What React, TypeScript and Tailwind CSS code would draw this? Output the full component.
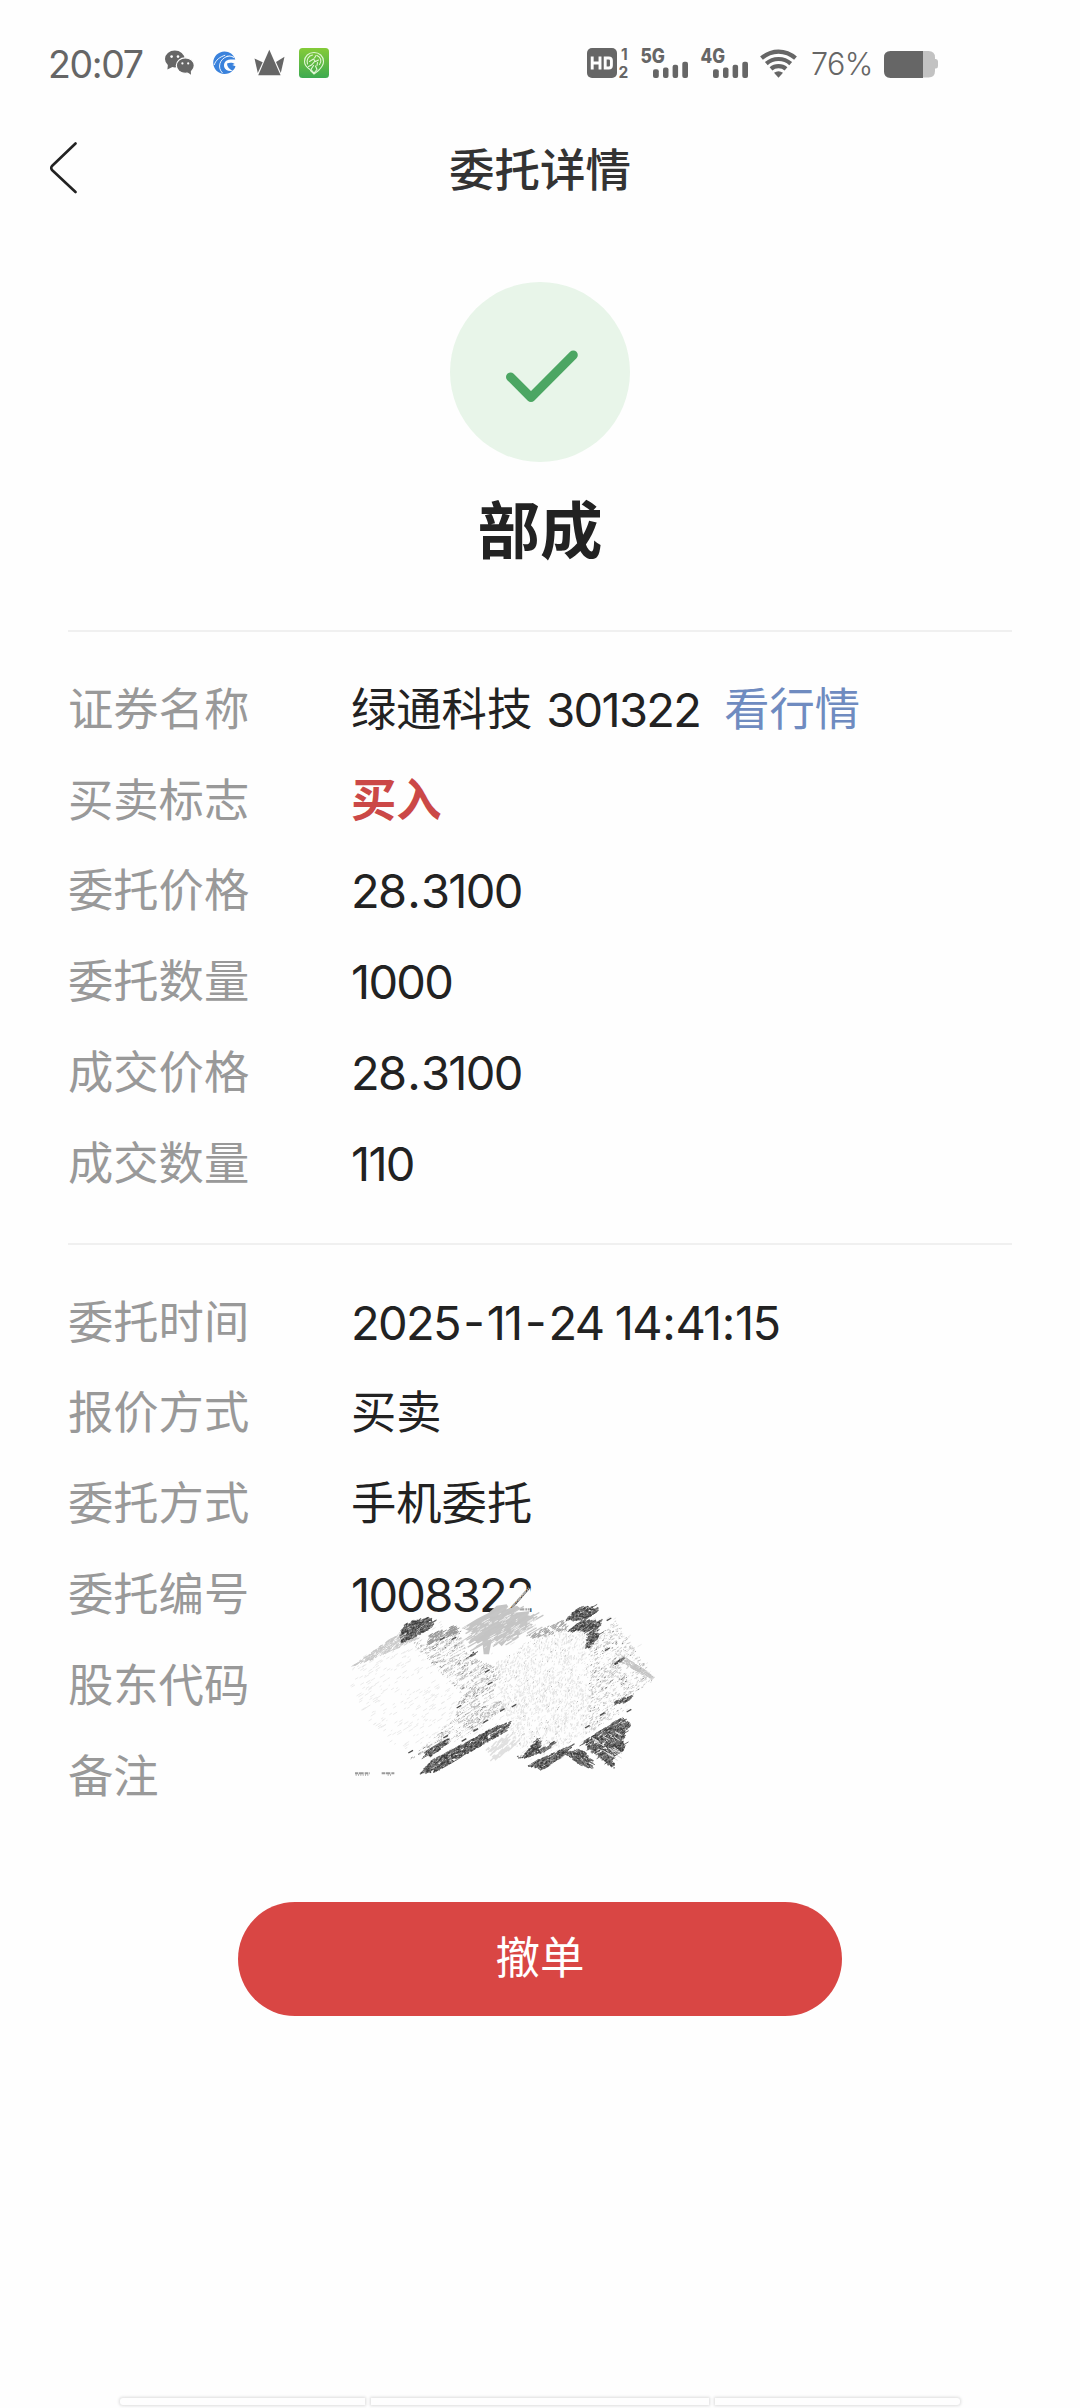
import React from "react";

/* ---------- status bar icons ---------- */

function ChatIcon() {
  return (
    <svg className="ml-[17px] h-[30px] w-[29px]" viewBox="0 0 29 30">
      <ellipse cx="9.8" cy="11" rx="9.8" ry="8.4" fill="#666" />
      <path d="M3 16l-.6 5.4 6-3z" fill="#666" />
      <circle cx="6.6" cy="8.6" r="1.3" fill="#fefefe" />
      <circle cx="13" cy="8.6" r="1.3" fill="#fefefe" />
      <ellipse cx="20.3" cy="17.6" rx="9" ry="7.8" fill="#666" stroke="#fefefe" strokeWidth="1.2" />
      <path d="M22 24l4 2.8-.3-5.6z" fill="#666" />
      <circle cx="17.4" cy="15.4" r="1.1" fill="#fefefe" />
      <circle cx="23.2" cy="15.4" r="1.1" fill="#fefefe" />
    </svg>
  );
}

function SwirlIcon() {
  return (
    <svg className="ml-[19px] h-[30px] w-[23px]" viewBox="0 0 23 30">
      <path
        d="M22.3 11.5C20.6 6.6 16.4 3.6 11.5 3.6 5.2 3.6.2 8.700.2 14.8S5.200 26 11.500 26c3.200 0 5.800-1 8-3.200-4.200.8-7.300-.8-8.200-3.600-1-3.400.8-6.600 4.300-7.400 2.300-.5 4.800-.3 6.700-.3z"
        fill="#3a82dc"
      />
      <path d="M14 15.500c2.800-1.200 6-.7 7.700.5l-2.400 1 3.200 1.200c-.6 2.200-1.700 3.500-3.200 4.500-3-1.700-5.300-3.800-5.300-7.200z" fill="#3a82dc" />
      <path d="M9.500 25C4 19.500 6.500 11 14.500 8.200M1.200 17c1.500-5 5.500-8 11-9.800" fill="none" stroke="#fefefe" strokeWidth=".9" />
      <path d="M13.500 8.500c3-.9 5.400-.4 7.500 1" fill="none" stroke="#fefefe" strokeWidth="1.100" />
    </svg>
  );
}

function CrownIcon() {
  return (
    <svg className="ml-[18px] h-[30px] w-[31px]" viewBox="0 0 31 30">
      <path d="M15.300 1.800L26.600 27.200H4.200z" fill="#666" />
      <path d="M.5 10.500L8.700 14.200 3.800 25z" fill="#666" />
      <path d="M30.500 8.800L22 14 26.800 25z" fill="#666" />
    </svg>
  );
}

function GreenAppIcon() {
  return (
    <svg className="ml-[14px] h-[30px] w-[30px]" viewBox="0 0 30 30">
      <defs>
        <linearGradient id="greenApp" x1="0" y1="0" x2="0" y2="1">
          <stop offset="0" stopColor="#85cb38" />
          <stop offset="1" stopColor="#3daa50" />
        </linearGradient>
      </defs>
      <rect width="30" height="30" rx="3.500" fill="url(#greenApp)" />
      <g fill="none" stroke="#e2f6d6" strokeWidth="1.100" strokeLinecap="round">
        <path d="M11 21.500C8 19.500 5.500 17 5.500 13.500 5.500 8.200 9.700 4.500 15 4.500s9.500 3.700 9.500 9c0 4-3 7-5 9L15 26l-3.500-3.500" />
        <path d="M8.500 16c-1.500-4 1-8.500 5-9M18 7.500c4 1.500 5 6 2.500 9" />
        <path d="M17 7.500l-1.500 2.500M10.500 13.500l4-2.500 1.500 2-3.500 4-3 1.500M16.500 13.500l3-1.500M18.500 14.500l-.5 3M14.500 17.500l-2.500 4 3 3.500 3-3.500-1.500-3.500" />
      </g>
    </svg>
  );
}

function HdIcon() {
  return (
    <svg className="h-[32px] w-[44px] overflow-visible" viewBox="0 0 44 32">
      <rect x="0" y="1" width="30" height="30" rx="5" fill="#666" />
      <g fill="none" stroke="#fefefe" strokeWidth="2.900">
        <path d="M5.200 9.500v13M13 9.500v13M5.200 16h7.800" />
        <path d="M18.200 11h3.600q2.600 0 2.600 2.600v4.800q0 2.600-2.600 2.600h-3.600z" />
      </g>
      <text x="34" y="12.500" fontFamily="Inter" fontWeight="700" fontSize="15.500" fill="#666">1</text>
      <text x="31.500" y="31" fontFamily="Inter" fontWeight="700" fontSize="15.500" fill="#666">2</text>
    </svg>
  );
}

function Signal({ label, className }: { label: string; className: string }) {
  return (
    <svg className={className} viewBox="0 0 48 32">
      <text x="-.5" y="15.600" fontFamily="Inter" fontWeight="800" fontSize="19.500" textLength="24.500" lengthAdjust="spacingAndGlyphs" fill="#666">
        {label}
      </text>
      <g fill="#666">
        <rect x="12" y="22.300" width="5.800" height="8.700" rx="2" />
        <rect x="22" y="20.500" width="5.500" height="10.500" rx="2" />
        <rect x="31.600" y="17.700" width="5.500" height="13.300" rx="2" />
        <rect x="41.300" y="14.700" width="5.700" height="16.300" rx="2" />
      </g>
    </svg>
  );
}

function WifiIcon() {
  return (
    <svg className="ml-[11px] h-[32px] w-[37px]" viewBox="0 0 37 32">
      <g fill="none" stroke="#666" strokeWidth="4.200">
        <path d="M1.500 11.200Q9 4.600 18.500 4.600T35.500 11.200" />
        <path d="M6.300 16.600Q11.500 12 18.500 12T30.700 16.600" />
        <path d="M11 21.800Q14 19.200 18.500 19.200T26 21.800" />
      </g>
      <path d="M14 25.800Q18.500 22.800 23 25.800L18.500 30.800z" fill="#666" />
    </svg>
  );
}

function BatteryIcon() {
  return (
    <svg className="h-[30px] w-[54px]" viewBox="0 0 54 30">
      <path d="M38 3h6.500q6.500 0 6.500 6.500V11h.8q2.200 0 2.200 2.500v4.500q0 2.500-2.200 2.500H51v2.500q0 6.500-6.500 6.500H38z" fill="#c2c2c2" />
      <path d="M39 3v27H6.500Q0 30 0 23.500v-14Q0 3 6.500 3z" fill="#666" />
    </svg>
  );
}

function StatusBar() {
  return (
    <div className="flex h-[126px] items-center pl-[48px] text-[#666]">
      <div className="mt-[3px] w-[100px] whitespace-nowrap text-[37.500px] leading-none tracking-[-1.400px]">20:07</div>
      <ChatIcon />
      <SwirlIcon />
      <CrownIcon />
      <GreenAppIcon />
      <div className="ml-[258px] flex items-center">
        <HdIcon />
        <Signal label="5G" className="ml-[10px] h-[32px] w-[48px] overflow-visible" />
        <Signal label="4G" className="ml-[12px] h-[32px] w-[48px] overflow-visible" />
        <WifiIcon />
        <div className="ml-[14px] mt-[3px] w-[73px] whitespace-nowrap text-[30.500px] font-light leading-none tracking-[-0.6px]">
          76%
        </div>
        <BatteryIcon />
      </div>
    </div>
  );
}

/* ---------- scribble that hides the account code ---------- */

type Pt = [number, number];

function makeRandom(seed: number) {
  let s = seed;
  return () => {
    s = (s * 1664525 + 1013904223) % 4294967296;
    return s / 4294967296;
  };
}

function inside([x, y]: Pt, poly: Pt[]) {
  let hit = false;
  for (let i = 0, j = poly.length - 1; i < poly.length; j = i++) {
    const [xi, yi] = poly[i];
    const [xj, yj] = poly[j];
    if (yi > y !== yj > y && x < ((xj - xi) * (y - yi)) / (yj - yi) + xi) hit = !hit;
  }
  return hit;
}

function hatch(poly: Pt[], count: number, length: number, angle: number, seed: number) {
  const rnd = makeRandom(seed);
  const xs = poly.map((p) => p[0]);
  const ys = poly.map((p) => p[1]);
  const x0 = Math.min(...xs);
  const y0 = Math.min(...ys);
  const w = Math.max(...xs) - x0;
  const h = Math.max(...ys) - y0;
  const c = Math.cos((angle * Math.PI) / 180);
  const s = Math.sin((angle * Math.PI) / 180);
  let d = "";
  let n = 0;
  for (let k = 0; k < count * 8 && n < count; k++) {
    const p: Pt = [x0 + rnd() * w, y0 + rnd() * h];
    const l = length * (0.3 + rnd());
    if (!inside(p, poly)) continue;
    d += `M${(p[0] - (c * l) / 2).toFixed(1)} ${(p[1] - (s * l) / 2).toFixed(1)}l${(c * l).toFixed(1)} ${(s * l).toFixed(1)}`;
    n++;
  }
  return d;
}

const outline: Pt[] = [[60, 320], [220, 212], [320, 180], [400, 215], [520, 140], [640, 190], [770, 140], [870, 180], [960, 290], [975, 360], [910, 400], [900, 450], [780, 530], [760, 580], [640, 610], [560, 590], [540, 490], [320, 630], [235, 600], [170, 530], [70, 420]];
const middleGrey: Pt[] = [[250, 250], [385, 205], [420, 290], [520, 330], [490, 400], [530, 440], [430, 520], [300, 570], [240, 600], [380, 470], [395, 400], [300, 300]];
const rightBody: Pt[] = [[500, 310], [640, 220], [780, 200], [780, 520], [700, 560], [560, 560], [520, 430]];
const rightEdge: Pt[] = [[780, 260], [860, 180], [930, 290], [980, 360], [915, 400], [890, 450], [780, 520]];
const leftEdge: Pt[] = [[70, 318], [215, 215], [270, 235], [130, 300]];
const leftBody: Pt[] = [[60, 330], [250, 260], [380, 400], [370, 500], [240, 600], [120, 480]];

const darkPatches: Pt[][] = [
  [[218, 215], [232, 190], [285, 170], [318, 180], [300, 210], [218, 250]],
  [[275, 640], [310, 600], [480, 510], [545, 485], [530, 515], [400, 590], [320, 636]],
  [[710, 178], [745, 145], [780, 138], [815, 148], [770, 178], [735, 182]],
  [[718, 212], [760, 180], [815, 185], [808, 230], [785, 262], [772, 262], [780, 215]],
  [[763, 545], [880, 470], [905, 500], [885, 515], [885, 570], [855, 590], [860, 628], [825, 600], [785, 570]],
  [[705, 580], [760, 570], [790, 600], [790, 625], [755, 615]],
  [[595, 618], [630, 598], [740, 550], [700, 590], [640, 630]],
  [[550, 595], [590, 580], [625, 535], [640, 565], [690, 540], [650, 575], [590, 592]],
  [[280, 580], [365, 530], [350, 555], [305, 590]],
  [[855, 425], [910, 405], [905, 422], [870, 430]],
  [[855, 310], [890, 288], [880, 302], [862, 314]],
  [[422, 288], [440, 270], [436, 286]],
];

const strayDashes: Pt[] = [[475, 333], [483, 370], [390, 440], [470, 484], [245, 575], [835, 268], [820, 462], [900, 452], [375, 235], [840, 178], [555, 437], [775, 500], [670, 548], [350, 530], [440, 510], [340, 236], [405, 540], [520, 450]];

function Scribble() {
  return (
    <svg className="pointer-events-none absolute -left-[22px] -top-[11px] h-[250px] w-[350px]" viewBox="0 0 1050 750" fill="none">
      <path d="M536 162L604 84V162z" fill="#fefefe" />
      <path d="M550 140L600 84M572 148h30" stroke="#a5a5a5" strokeWidth="7" strokeDasharray="14 3 5 2" />
      <path d="M488 162l24-24h20v24z" fill="#c4c4c4" />
      <path
        d="M398 205l45-28 35-18 25-22 30-4 5 8-14 10 40-14 10 8-25 14 55-6-10 12 22 6-18 16 14 6-38 26-36 18-20 22-18-18-14 10-6 32-16 0-4-40-14 8-12-14 4-18z"
        fill="#c4c4c4"
      />
      <path d={hatch([[400, 220], [520, 145], [630, 165], [620, 215], [540, 255], [440, 265]], 65, 50, -30, 7)} stroke="#c6c6c6" strokeWidth="4" />
      <path d={hatch([[400, 200], [520, 160], [620, 180], [560, 250], [460, 240]], 60, 16, -30, 4)} stroke="#fefefe" strokeWidth="2" />

      <path d={hatch(outline, 600, 12, -32, 11)} stroke="#e6e6e6" strokeWidth="2.500" />
      <path d={hatch(leftEdge, 420, 9, -32, 12)} stroke="#c6c6c6" strokeWidth="2.500" />
      <path d={hatch(leftBody, 120, 14, -32, 13)} stroke="#ececec" strokeWidth="3" />
      <path d={hatch(middleGrey, 2300, 5, -35, 14)} stroke="#bdbdbd" strokeWidth="3" />
      <path d={hatch(middleGrey, 150, 7, -32, 15)} stroke="#777" strokeWidth="2.500" />
      <path d={hatch(middleGrey, 170, 35, -32, 16)} stroke="#fefefe" strokeWidth="4" />
      <path d={hatch(rightBody, 1500, 6, -78, 17)} stroke="#e4e4e4" strokeWidth="3" />
      <path d={hatch(rightBody, 170, 4, -40, 18)} stroke="#b0b0b0" strokeWidth="3" />
      <path d={hatch(rightBody, 60, 50, -85, 118)} stroke="#fefefe" strokeWidth="3" />
      <path d={hatch(rightEdge, 800, 6, -28, 19)} stroke="#cacaca" strokeWidth="3" />
      <path d={hatch(rightEdge, 110, 5, -28, 20)} stroke="#858585" strokeWidth="3" />
      <path d={hatch(rightEdge, 60, 35, -30, 119)} stroke="#fefefe" strokeWidth="3.500" />
      <path d={hatch([[880, 285], [970, 345], [965, 358], [875, 305]], 110, 14, 28, 21)} stroke="#c2c2c2" strokeWidth="2.500" />
      <path d={hatch([[465, 570], [540, 520], [570, 550], [500, 600]], 70, 20, -45, 22)} stroke="#e0e0e0" strokeWidth="4" />
      <path d={hatch([[600, 225], [700, 180], [720, 205], [620, 240]], 110, 10, -32, 23)} stroke="#a6a6a6" strokeWidth="3" />
      <path d={hatch([[300, 225], [375, 195], [395, 215], [300, 255]], 110, 12, -30, 24)} stroke="#999" strokeWidth="3" />

      {darkPatches.map((poly, i) => {
        const area = Math.abs(
          poly.reduce((sum, [x, y], k) => {
            const [nx, ny] = poly[(k + 1) % poly.length];
            return sum + x * ny - nx * y;
          }, 0) / 2,
        );
        const angle = i === 5 ? 28 : -31;
        return (
          <g key={i}>
            <path d={hatch(poly, Math.round(area / 170), 34, angle, 20 + i)} stroke="#707070" strokeWidth="3" />
            <path d={hatch(poly, Math.round(area / 26), 14, angle, 40 + i)} stroke="#6a6a6a" strokeWidth="3.500" />
            <path d={hatch(poly, Math.round(area / 38), 6, angle, 70 + i)} stroke="#3c3c3c" strokeWidth="3.500" />
            <path d={hatch(poly, Math.round(area / 75), 4, angle, 90 + i)} stroke="#a8a8a8" strokeWidth="3" />
          </g>
        );
      })}
      <path d={hatch([[790, 540], [880, 510], [870, 610]], 24, 22, 30, 120)} stroke="#dcdcdc" strokeWidth="3" />
      <path d={strayDashes.map(([x, y]) => `M${x - 7} ${y + 4}l14-8`).join("")} stroke="#4d4d4d" strokeWidth="4" />
      <path d="M78 640h44M158 640h38" stroke="#9a9a9a" strokeWidth="6" strokeDasharray="10 2 14 3" />
      <path d="M80 645h40M176 645h12" stroke="#777" strokeWidth="3" strokeDasharray="3 4" />
    </svg>
  );
}

/* ---------- detail rows ---------- */

function Row({ label, children }: { label: string; children?: React.ReactNode }) {
  return (
    <div className="flex h-[90.800px] items-center text-[45.300px] leading-none">
      <div className="w-[283px] shrink-0 text-[#999]">{label}</div>
      <div className="relative flex items-center whitespace-nowrap text-[#222]">{children}</div>
    </div>
  );
}

/* Digits are set tight while punctuation keeps some room on both sides. */
function Num({ children, className = "" }: { children: string; className?: string }) {
  return (
    <span className={`text-[47px] font-[370] leading-none tracking-[-1.700px] ${className}`}>
      {children.split(/([-.:])/).map((part, i) => {
        if (part === "-") return <span key={i} className="relative -top-px mx-[3.500px]">-</span>;
        if (part === ".") return <span key={i} className="mx-[1.900px]">.</span>;
        if (part === ":") return <span key={i} className="mx-[1.300px]">:</span>;
        return part;
      })}
    </span>
  );
}

export default function App() {
  return (
    <div
      className="flex h-[2408px] w-[1080px] flex-col overflow-hidden bg-[#fefefe]"
      style={{ fontFamily: 'Inter, "Noto Sans CJK SC", sans-serif' }}
    >
      <StatusBar />

      <header className="flex h-[88px] items-center px-[50px]">
        <svg className="-mt-[5px] h-[52px] w-[28px]" viewBox="0 0 28 52" fill="none">
          <path d="M25.500 1.500L2 24q-1.500 2 0 4L25.500 50" stroke="#222" strokeWidth="2.600" strokeLinecap="round" strokeLinejoin="round" />
        </svg>
        <h1 className="mr-[28px] mt-[2px] flex-1 text-center text-[45.500px] font-medium leading-none text-[#333]">委托详情</h1>
      </header>

      <section className="flex h-[416px] flex-col items-center pt-[68px]">
        <div className="flex h-[180px] w-[180px] items-center justify-center rounded-full bg-[#e8f5e9]">
          <svg className="h-[180px] w-[180px]" viewBox="0 0 180 180" fill="none">
            <path d="M60.500 95L81 115.500 123.300 73" stroke="#4ca663" strokeWidth="9" strokeLinecap="round" strokeLinejoin="round" />
          </svg>
        </div>
        <div className="mt-[38px] text-[62.500px] font-bold leading-none text-[#222]">部成</div>
      </section>

      <main className="mx-[68px] flex flex-col">
        <section className="border-t-2 border-[#f0f0f0] pb-[34px] pt-[32px]">
          <Row label="证券名称">
            <span>绿通科技</span>
            <Num className="ml-[14px]">301322</Num>
            <a className="ml-[24px] text-[#6f8bc0]">看行情</a>
          </Row>
          <Row label="买卖标志">
            <span className="font-bold text-[#cb4847]">买入</span>
          </Row>
          <Row label="委托价格"><Num>28.3100</Num></Row>
          <Row label="委托数量"><Num>1000</Num></Row>
          <Row label="成交价格"><Num>28.3100</Num></Row>
          <Row label="成交数量"><Num>110</Num></Row>
        </section>

        <section className="border-t-2 border-[#f0f0f0] pt-[32px]">
          <Row label="委托时间"><Num>2025-11-24 14:41:15</Num></Row>
          <Row label="报价方式">买卖</Row>
          <Row label="委托方式">手机委托</Row>
          <Row label="委托编号">
            <Num>1008322</Num>
            <Scribble />
          </Row>
          <Row label="股东代码" />
          <Row label="备注" />
        </section>
      </main>

      <button className="mt-[80px] flex h-[114px] w-[604px] shrink-0 items-center justify-center self-center rounded-full bg-[#d94644] text-[44.500px] leading-none text-white">
        撤单
      </button>

      <div className="mb-[3px] mt-auto flex h-[7px] gap-[6px] self-center">
        <div className="w-[245px] rounded-l-[3px] bg-[#fefefe] shadow-[0_0_3px_1px_#dedede]" />
        <div className="w-[338px] bg-[#fefefe] shadow-[0_0_3px_1px_#dedede]" />
        <div className="w-[245px] rounded-r-[3px] bg-[#fefefe] shadow-[0_0_3px_1px_#dedede]" />
      </div>
    </div>
  );
}
